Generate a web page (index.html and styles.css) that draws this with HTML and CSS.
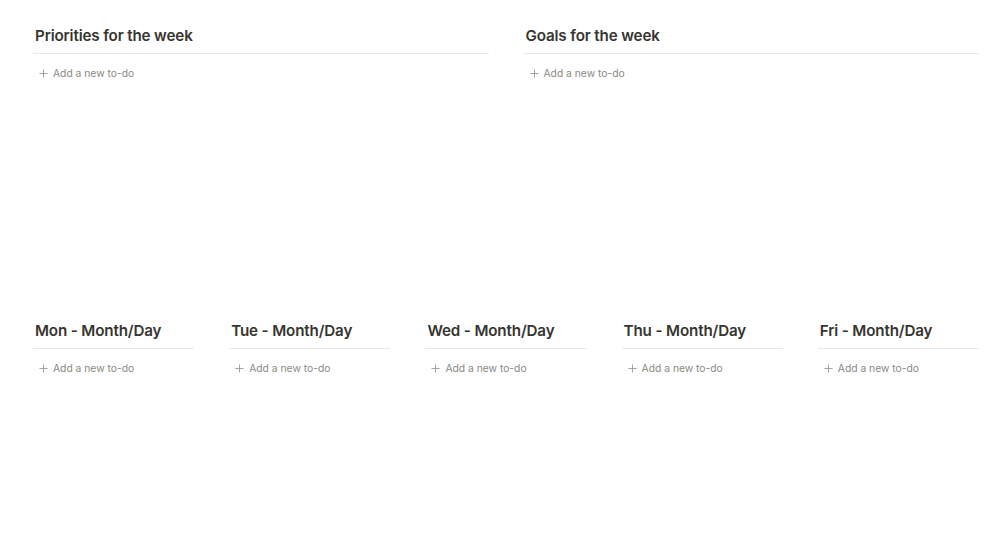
FILE: index.html
```html
<!DOCTYPE html>
<html>
<head>
<meta charset="utf-8">
<link rel="stylesheet" href="styles.css">
</head>
<body>
<div class="page">
  <div class="row row-top">
    <section class="col">
      <h3 class="title">Priorities for the week</h3>
      <div class="add"><svg class="plus" viewBox="0 0 10 10"><path d="M5 0.5V9.5M0.5 5H9.5"/></svg><span>Add a new to-do</span></div>
    </section>
    <section class="col">
      <h3 class="title">Goals for the week</h3>
      <div class="add"><svg class="plus" viewBox="0 0 10 10"><path d="M5 0.5V9.5M0.5 5H9.5"/></svg><span>Add a new to-do</span></div>
    </section>
  </div>
  <div class="row row-days">
    <section class="col">
      <h3 class="title">Mon - Month/Day</h3>
      <div class="add"><svg class="plus" viewBox="0 0 10 10"><path d="M5 0.5V9.5M0.5 5H9.5"/></svg><span>Add a new to-do</span></div>
    </section>
    <section class="col">
      <h3 class="title">Tue - Month/Day</h3>
      <div class="add"><svg class="plus" viewBox="0 0 10 10"><path d="M5 0.5V9.5M0.5 5H9.5"/></svg><span>Add a new to-do</span></div>
    </section>
    <section class="col">
      <h3 class="title">Wed - Month/Day</h3>
      <div class="add"><svg class="plus" viewBox="0 0 10 10"><path d="M5 0.5V9.5M0.5 5H9.5"/></svg><span>Add a new to-do</span></div>
    </section>
    <section class="col">
      <h3 class="title">Thu - Month/Day</h3>
      <div class="add"><svg class="plus" viewBox="0 0 10 10"><path d="M5 0.5V9.5M0.5 5H9.5"/></svg><span>Add a new to-do</span></div>
    </section>
    <section class="col">
      <h3 class="title">Fri - Month/Day</h3>
      <div class="add"><svg class="plus" viewBox="0 0 10 10"><path d="M5 0.5V9.5M0.5 5H9.5"/></svg><span>Add a new to-do</span></div>
    </section>
  </div>
</div>
</body>
</html>
```
FILE: styles.css
```css
* { box-sizing: border-box; }
html, body {
  margin: 0;
  background: #ffffff;
}
body {
  font-family: Inter, "Noto Sans", "Liberation Sans", sans-serif;
  color: #37352f;
}
.page {
  padding: 25px 26px 0 33px;
}
.row {
  display: grid;
  column-gap: 35px;
}
.row-top {
  grid-template-columns: 1fr 1fr;
  height: 295px;
}
.row-days {
  grid-template-columns: repeat(5, 1fr);
}
.title {
  margin: 0;
  padding: 0 2px 7px;
  font-size: 15.2px;
  line-height: 21px;
  font-weight: 600;
  letter-spacing: -0.15px;
  color: #37352f;
  border-bottom: 1px solid #e9e9e7;
}
.add {
  display: flex;
  align-items: center;
  gap: 5px;
  margin-top: 11px;
  padding-left: 6px;
  font-size: 10.3px;
  line-height: 16px;
  color: #8a8984;
}
.plus {
  width: 9px;
  height: 9px;
  fill: none;
  stroke: #a3a29f;
  stroke-width: 1.1;
}
```
